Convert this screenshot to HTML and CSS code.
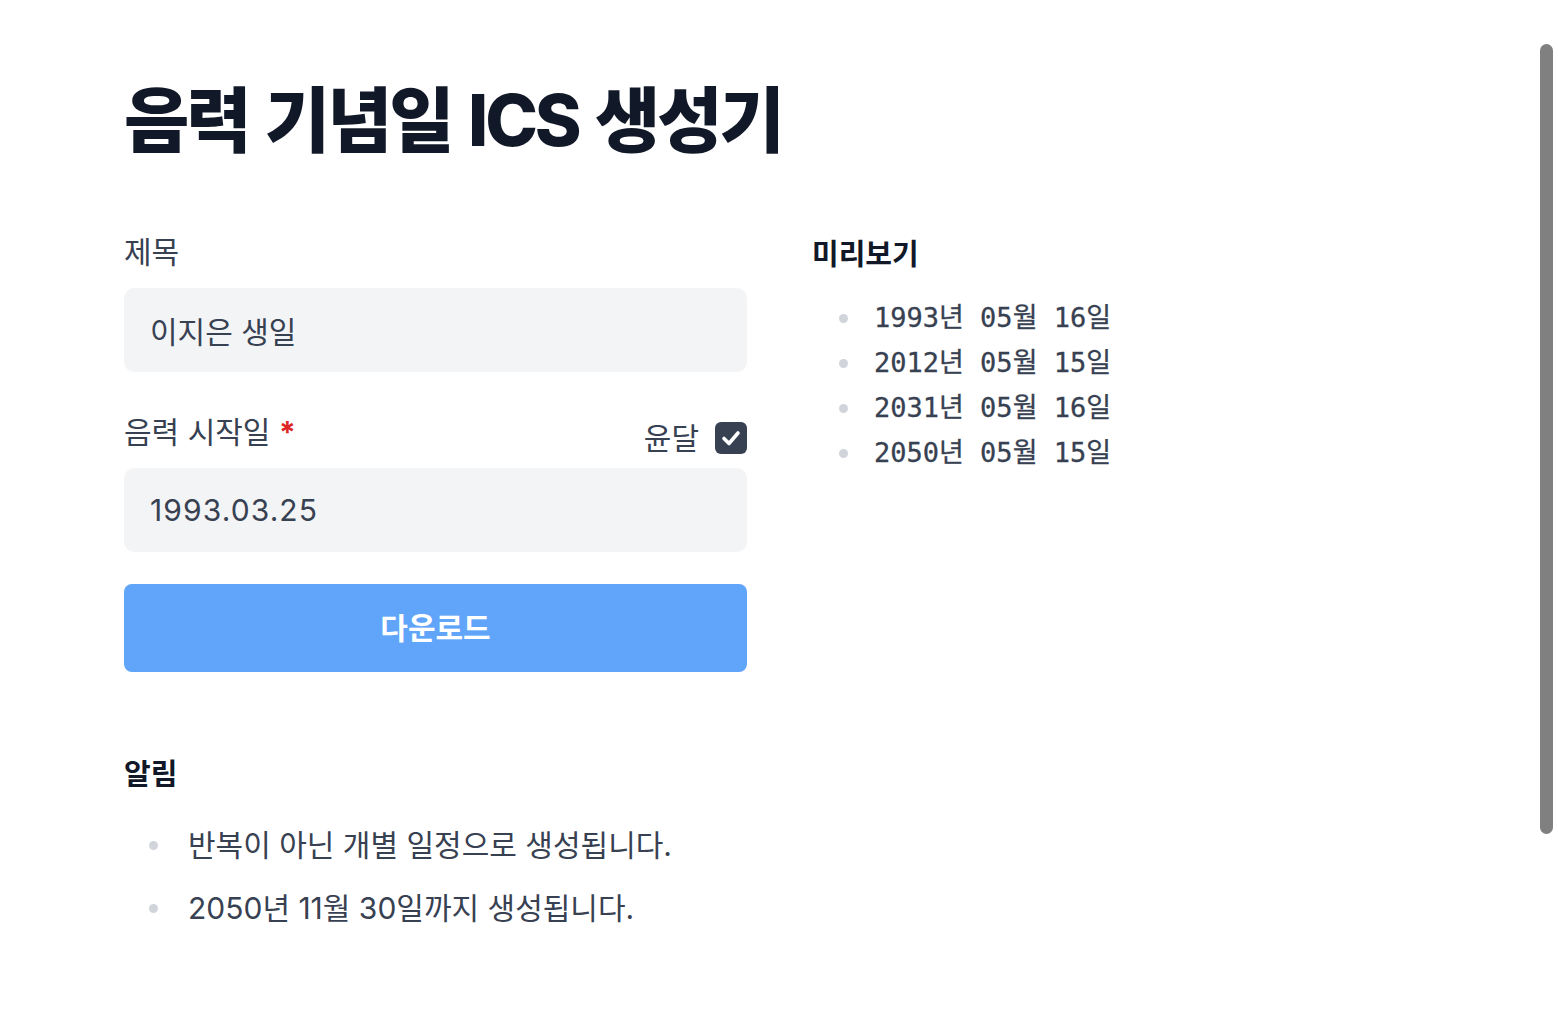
FILE: index.html
```html
<!DOCTYPE html>
<html lang="ko">
<head>
<meta charset="utf-8">
<title>음력 기념일 ICS 생성기</title>
<link rel="stylesheet" href="styles.css">
</head>
<body>
<main class="page">
  <h1 class="title">음력 기념일 ICS 생성기</h1>
  <div class="columns">
    <section class="form-col">
      <label class="label" for="title">제목</label>
      <div class="input" id="title">이지은 생일</div>

      <div class="label-row">
        <span class="label">음력 시작일 <span class="req">*</span></span>
        <span class="leap">
          <span class="leap-text">윤달</span>
          <span class="checkbox">
            <svg viewBox="0 0 32 32" width="32" height="32"><path d="M9 16.5 L14 21.5 L23 11" fill="none" stroke="#fff" stroke-width="3.6" stroke-linecap="round" stroke-linejoin="round"/></svg>
          </span>
        </span>
      </div>
      <div class="input input-date">1993.03.25</div>

      <button class="btn">다운로드</button>

      <h2 class="sub">알림</h2>
      <ul class="notes">
        <li>반복이 아닌 개별 일정으로 생성됩니다.</li>
        <li>2050년 11월 30일까지 생성됩니다.</li>
      </ul>
    </section>
    <section class="preview-col">
      <h2 class="sub sub-preview">미리보기</h2>
      <ul class="preview">
        <li>1993년 05월 16일</li>
        <li>2012년 05월 15일</li>
        <li>2031년 05월 16일</li>
        <li>2050년 05월 15일</li>
      </ul>
    </section>
  </div>
</main>
<div class="scroll-thumb"></div>
</body>
</html>
```

FILE: styles.css
```css
html, body {
  margin: 0;
  padding: 0;
  background: #ffffff;
  overflow: hidden;
}
body {
  font-family: "Inter", "Noto Sans CJK KR", sans-serif;
  color: #374151;
}
.page {
  padding: 80px 0 0 124px;
}
.title {
  margin: 0;
  font-size: 71px;
  line-height: 80px;
  font-weight: 800;
  color: #111827;
  letter-spacing: -3.1px;
  word-spacing: 4px;
}
.columns {
  display: flex;
  gap: 65px;
  margin-top: 72px;
}
.form-col {
  width: 623px;
  display: flex;
  flex-direction: column;
}
.label {
  display: block;
  font-size: 30px;
  line-height: 40px;
  color: #374151;
}
.req {
  color: #dc2626;
  font-weight: 700;
}
.input {
  margin-top: 16px;
  height: 84px;
  box-sizing: border-box;
  background: #f3f4f6;
  border-radius: 10px;
  padding: 0 26px;
  display: flex;
  align-items: center;
  font-size: 30px;
  color: #374151;
}
.label-row {
  margin-top: 40px;
  display: flex;
  justify-content: space-between;
  align-items: flex-end;
  height: 42px;
}
.label-row .label {
  align-self: flex-start;
}
.leap {
  display: flex;
  align-items: center;
  gap: 16px;
}
.leap-text {
  font-size: 30px;
  line-height: 32px;
}
.checkbox {
  width: 32px;
  height: 32px;
  border-radius: 6px;
  background: #374151;
  display: block;
}
.checkbox svg {
  display: block;
}
.input-date {
  margin-top: 14px;
  letter-spacing: 1.1px;
}
.btn {
  margin-top: 32px;
  height: 88px;
  border: none;
  border-radius: 8px;
  background: #60a5fa;
  color: #ffffff;
  font-family: inherit;
  font-size: 30px;
  font-weight: 700;
  padding: 0 0 4px;
}
.sub {
  margin: 83px 0 0;
  font-size: 29px;
  line-height: 40px;
  font-weight: 700;
  color: #111827;
}
.notes {
  list-style: none;
  margin: 26px 0 0;
  padding: 0;
}
.notes li {
  position: relative;
  padding-left: 64px;
  font-size: 30px;
  line-height: 48px;
  color: #374151;
}
.notes li + li {
  margin-top: 15px;
}
.notes li::before {
  content: "";
  position: absolute;
  left: 25px;
  top: 20px;
  width: 9px;
  height: 9px;
  border-radius: 50%;
  background: #d1d5db;
}
.preview-col {
  display: flex;
  flex-direction: column;
}
.sub-preview {
  margin-top: 3px;
}
.preview {
  list-style: none;
  margin: 20px 0 0;
  padding: 0;
}
.preview li {
  position: relative;
  padding-left: 62px;
  font-family: "DejaVu Sans Mono", "Noto Sans CJK KR", monospace;
  font-size: 27px;
  line-height: 45px;
  color: #374151;
  font-weight: 400;
  -webkit-text-stroke: 0.3px #374151;
}
.preview li::before {
  content: "";
  position: absolute;
  left: 27px;
  top: 19px;
  width: 9px;
  height: 9px;
  border-radius: 50%;
  background: #d1d5db;
}
.scroll-thumb {
  position: fixed;
  left: 1540px;
  top: 44px;
  width: 13px;
  height: 790px;
  border-radius: 7px;
  background: #808080;
}
```
